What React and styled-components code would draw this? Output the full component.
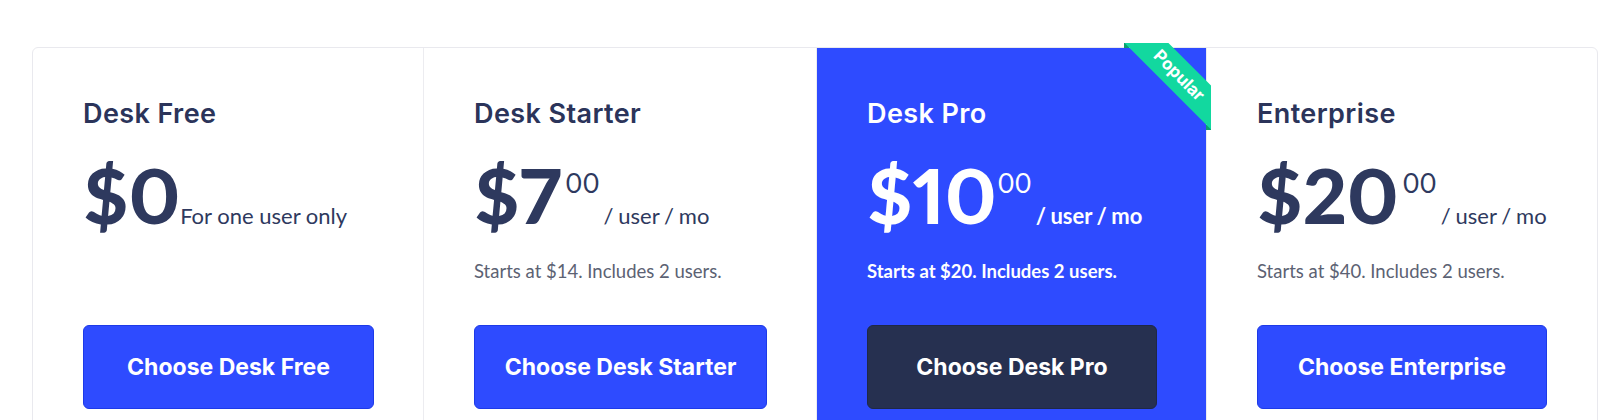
import React from "react";
import styled, { createGlobalStyle } from "styled-components";

const Global = createGlobalStyle`
  html, body { margin: 0; padding: 0; background: #ffffff; }
  body { font-family: "Lato", "Liberation Sans", sans-serif; }
`;

const Page = styled.div`
  padding: 47px 0 0 32px;
  overflow: hidden;
  height: 420px;
  box-sizing: border-box;
`;

const Table = styled.div`
  width: 1566px;
  display: grid;
  grid-template-columns: 391px 393px 390px 1fr;
  border: 1px solid #e9e9ee;
  border-radius: 6px;
  box-sizing: border-box;
`;

const Plan = styled.div`
  position: relative;
  display: flex;
  flex-direction: column;
  padding: 50px 49px 50px 50px;
  border-right: 1px solid ${(p) => (p.$last ? "transparent" : "#ececf0")};
  background: ${(p) => (p.$featured ? "#2e4bff" : "transparent")};
  color: ${(p) => (p.$featured ? "#ffffff" : "#2b345a")};
`;

const Title = styled.h3`
  margin: 0;
  font-family: "Inter", "Open Sans", sans-serif;
  font-weight: 600;
  font-size: 27px;
  line-height: 32px;
  letter-spacing: 0.4px;
`;

const Price = styled.div`
  margin-top: 27px;
  font-family: "Lato", sans-serif;
  font-size: 77px;
  line-height: 74px;
  white-space: nowrap;
  font-variant-numeric: proportional-nums;
  color: ${(p) => (p.$featured ? "#ffffff" : "#2e395e")};
`;

const Amount = styled.span`
  font-weight: 900;
`;

const Cents = styled.span`
  font-size: 26px;
  font-weight: 400;
  vertical-align: 31px;
  line-height: 1;
  margin-left: ${(p) => (p.$featured ? "1px" : "4px")};
`;

const Unit = styled.span`
  font-size: 22px;
  font-weight: ${(p) => (p.$featured ? 700 : 400)};
  line-height: 1;
  word-spacing: ${(p) => (p.$tight ? "0" : "-0.8px")};
  margin-left: ${(p) => (p.$tight ? "0" : "4px")};
`;

const Note = styled.p`
  margin: 28px 0 0;
  font-family: "Lato", sans-serif;
  font-size: 18.5px;
  line-height: 24px;
  font-weight: ${(p) => (p.$featured ? 700 : 400)};
  color: ${(p) => (p.$featured ? "#ffffff" : "#5c6273")};
`;

const Button = styled.button`
  margin-top: auto;
  width: 100%;
  height: 84px;
  border-radius: 6px;
  border: 1px solid ${(p) => (p.$dark ? "#1f2846" : "#1d3ae8")};
  background: ${(p) => (p.$dark ? "#263050" : "#2e4bff")};
  color: #ffffff;
  font-family: "Inter", "Open Sans", sans-serif;
  font-weight: 700;
  font-size: 23px;
  cursor: pointer;
`;

const Spacer = styled.div`
  height: 42px;
  flex: 0 0 auto;
`;

const Ribbon = styled.div`
  position: absolute;
  top: -5px;
  right: -5px;
  width: 87px;
  height: 87px;
  overflow: hidden;
  z-index: 2;

  &::before,
  &::after {
    content: "";
    position: absolute;
    width: 5px;
    height: 5px;
    background: #0c9c70;
  }
  &::before { top: 0; left: 0; }
  &::after { bottom: 0; right: 0; }
`;

const RibbonBand = styled.span`
  position: absolute;
  z-index: 1;
  left: -15.5px;
  top: 17px;
  width: 140px;
  height: 31px;
  line-height: 31px;
  text-align: center;
  background: #12d89f;
  color: #ffffff;
  font-family: "Inter", "Open Sans", sans-serif;
  font-weight: 700;
  font-size: 17px;
  transform: rotate(45deg);
`;

const plans = [
  { name: "Desk Free", amount: "$0", unit: "For one user only", free: true, button: "Choose Desk Free" },
  { name: "Desk Starter", amount: "$7", cents: "00", unit: "/ user / mo", note: "Starts at $14. Includes 2 users.", button: "Choose Desk Starter" },
  { name: "Desk Pro", amount: "$10", cents: "00", unit: "/ user / mo", note: "Starts at $20. Includes 2 users.", button: "Choose Desk Pro", featured: true },
  { name: "Enterprise", amount: "$20", cents: "00", unit: "/ user / mo", note: "Starts at $40. Includes 2 users.", button: "Choose Enterprise" },
];

export default function App() {
  return (
    <>
      <Global />
      <Page>
        <Table>
          {plans.map((p, i) => (
            <Plan key={p.name} $featured={p.featured} $last={i === plans.length - 1}>
              {p.featured && (
                <Ribbon>
                  <RibbonBand>Popular</RibbonBand>
                </Ribbon>
              )}
              <Title>{p.name}</Title>
              <Price $featured={p.featured}>
                <Amount>{p.amount}</Amount>
                {p.cents && <Cents $featured={p.featured}>{p.cents}</Cents>}
                <Unit $featured={p.featured} $tight={p.free}>{p.unit}</Unit>
              </Price>
              {p.note && <Note $featured={p.featured}>{p.note}</Note>}
              <Spacer />
              <Button $dark={p.featured}>{p.button}</Button>
            </Plan>
          ))}
        </Table>
      </Page>
    </>
  );
}
